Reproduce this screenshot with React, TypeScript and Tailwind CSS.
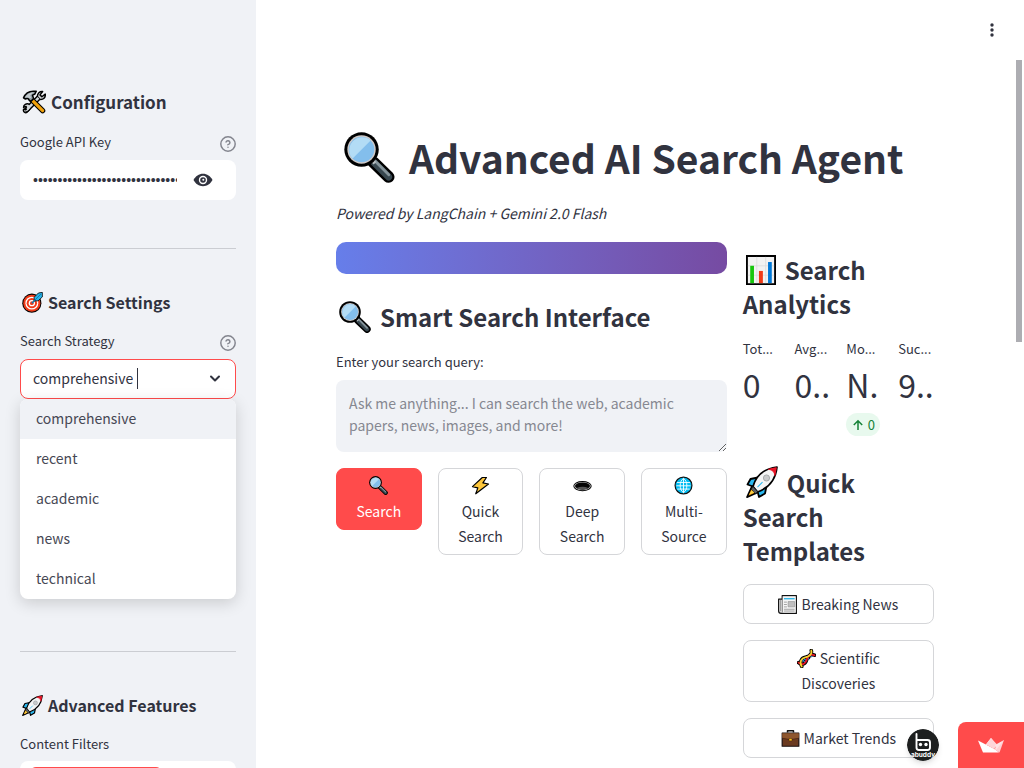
import { useState } from 'react';
import type { ReactNode } from 'react';

type IconProps = { className?: string };

function Emoji({ className = '', children }: IconProps & { children: ReactNode }) {
  return (
    <svg viewBox="0 0 32 32" aria-hidden="true" className={`inline-block shrink-0 ${className}`}>
      {children}
    </svg>
  );
}

function Magnifier({ className }: IconProps) {
  return (
    <Emoji className={className}>
      <path d="M18.5 19 28 28.2" stroke="#000" strokeWidth="7.4" strokeLinecap="round" />
      <path d="M19 19.3 28 28.2" stroke="#37474f" strokeWidth="4.4" strokeLinecap="round" />
      <path d="m19.5 18.2 8.6 8.6" stroke="#84939a" strokeWidth="1.8" strokeLinecap="round" />
      <path d="m16.4 16.6 3 3" stroke="#b8bec1" strokeWidth="2.2" />
      <circle cx="11" cy="11" r="10.8" fill="#000" />
      <circle cx="11" cy="11" r="8.9" fill="#cfcac8" />
      <circle cx="11" cy="11" r="8" fill="#83beec" />
      <path d="M5.4 16.7A8 8 0 0 1 16.7 5.4Z" fill="#b3dcf5" />
    </Emoji>
  );
}

function Tools({ className }: IconProps) {
  return (
    <Emoji className={className}>
      <path d="M5 27.5 22 10.5" stroke="#000" strokeWidth="7" strokeLinecap="round" />
      <path d="M20.5 8.5c0-4 3-7 7-6.5l-3.5 4.5 2.5 2.5 4.5-3.5c.5 4.5-2.5 7.5-7 7z" fill="#d5d9dc" stroke="#000" strokeWidth="2" strokeLinejoin="round" />
      <path d="M11.5 20.5c.5 4-2.5 9-7 9-2.5 0-3-2-2.5-4l3 1 1.500-2-1-2.500-3.500 1c0-4 4-5 6.500-4.500z" fill="#d5d9dc" stroke="#000" strokeWidth="1.8" strokeLinejoin="round" />
      <path d="M7 25.5 22 10.5" stroke="#d5d9dc" strokeWidth="3.3" />
      <path d="m11.5 11.5 16 16" stroke="#000" strokeWidth="7" strokeLinecap="round" />
      <path d="m12.5 12.5 15 15" stroke="#f2a20c" strokeWidth="4.2" strokeLinecap="round" />
      <path d="M2 10.5C4 5.5 8.5 1.5 15 1.5h4l-2 4-3 1.5 1.5 4.5-4 4-4-4.5-3 1z" fill="#8d999f" stroke="#000" strokeWidth="2" strokeLinejoin="round" />
      <path d="M4 9.5C7 5 11 3 16 3l-5 4 1.5 4" fill="#c4cbcf" />
    </Emoji>
  );
}

function Target({ className }: IconProps) {
  return (
    <Emoji className={className}>
      <circle cx="15" cy="17" r="14.6" fill="#000" />
      <circle cx="15" cy="17" r="13" fill="#f03a17" />
      <circle cx="15" cy="17" r="9.8" fill="#fff" />
      <circle cx="15" cy="17" r="7.9" fill="#f03a17" />
      <circle cx="15" cy="17" r="4.8" fill="#fff" />
      <circle cx="15" cy="17" r="2.8" fill="#f03a17" />
      <path d="m15 17 8-8" stroke="#067bb2" strokeWidth="2.2" />
      <path d="m18.5 8 6.5-6.5 6-1v7L24.500 13.500h-6z" fill="#28b3e8" stroke="#000" strokeWidth="1.2" strokeLinejoin="round" />
      <path d="m16 16 13-13" stroke="#067bb2" strokeWidth="1.4" />
    </Emoji>
  );
}

function Rocket({ className }: IconProps) {
  return (
    <Emoji className={className}>
      <path d="M6 20 1 31.2 12.500 26z" fill="#f59a00" stroke="#000" strokeWidth="1.6" strokeLinejoin="round" />
      <path d="M12 11.500 4.500 13 1.500 18.500l5.500 2zM20.500 20 19 27.500 13 31l-1.500-6z" fill="#2bb9f0" stroke="#000" strokeWidth="1.8" strokeLinejoin="round" />
      <path d="M7 20.500C9 13 15 3 31 1c-1.500 15-11 22-19.500 25z" fill="#f4f5f5" stroke="#000" strokeWidth="1.700" strokeLinejoin="round" />
      <path d="M22.500 3.300Q28.500 4 28.800 9.500L30.300 1.700z" fill="#e81224" stroke="#e81224" />
      <circle cx="20.500" cy="12" r="3.100" fill="#c8cbcc" stroke="#9b9fa1" strokeWidth=".8" />
      <path d="m16.500 16.200-5 5" stroke="#2bb9f0" strokeWidth="1.100" />
      <path d="m6.800 20.300 5 5.300-2.300 2.200-4.200-4.500z" fill="#5b6064" stroke="#000" strokeWidth=".7" />
      <path d="m3 28.800 2.600-4.600 2.700 2.400z" fill="#f7d046" />
    </Emoji>
  );
}

function Chart({ className }: IconProps) {
  return (
    <Emoji className={className}>
      <path d="M1 1h30v30H1z" fill="#f2f2f2" stroke="#000" strokeWidth="2" />
      <path d="M2 11.500h28M2 21.500h28M11.500 2v28M21 2v28" stroke="#dadada" strokeWidth=".8" />
      <path d="M4.500 11.500h4V30h-4z" fill="#16c60c" />
      <path d="M13.800 17H18v13h-4.200z" fill="#f03a17" />
      <path d="M23.500 7.500h4V30h-4z" fill="#0078d7" />
    </Emoji>
  );
}

function Bolt({ className }: IconProps) {
  return (
    <Emoji className={className}>
      <path d="M19 2.500 2.500 18l9 2L8 30 29.500 13.500l-9.500-2 6-9z" fill="#ffc83d" stroke="#000" strokeWidth="2" strokeLinejoin="round" />
    </Emoji>
  );
}

function Hole({ className }: IconProps) {
  return (
    <Emoji className={className}>
      <ellipse cx="16" cy="17" rx="15.500" ry="8.500" fill="#000" />
      <ellipse cx="16" cy="17" rx="14" ry="7" fill="#c7c7c7" />
      <ellipse cx="16" cy="17" rx="12.600" ry="6" fill="#050505" />
      <path d="M6 20q10-3.500 20 0-4 3-10 3t-10-3" fill="#555" />
    </Emoji>
  );
}

function Globe({ className }: IconProps) {
  return (
    <Emoji className={className}>
      <circle cx="16" cy="16" r="14.200" fill="#00bcf2" stroke="#111" strokeWidth="2" />
      <path d="M16 4v24M5 11h22M4 16.500h24M5.500 22h21M16 4c-7.500 5-7.500 19 0 24M16 4c7.500 5 7.500 19 0 24" fill="none" stroke="#fff" strokeWidth="1.500" />
    </Emoji>
  );
}

function Newspaper({ className }: IconProps) {
  return (
    <Emoji className={className}>
      <path d="M7 1h24v30H5q-4 0-4-4V7h6z" fill="#d9d9d9" stroke="#111" strokeWidth="1.900" strokeLinejoin="round" />
      <path d="M8 2.500h21.500v27H8z" fill="#f5f5f5" />
      <path d="M4.500 8v19M7.500 5v24" stroke="#777" strokeWidth="1.200" />
      <path d="M10 6.200h18" stroke="#35b9e9" strokeWidth="2.400" />
      <path d="M17 11h11v9H17z" fill="#bfbfbf" stroke="#8f8f8f" />
      <path d="M10 12h5M10 16h5M10 20h5M10 24h18M10 27h18" stroke="#8a8a8a" strokeWidth="1.300" />
    </Emoji>
  );
}

function Dna({ className }: IconProps) {
  return (
    <Emoji className={className}>
      <path d="M2.500 23C8 27.500 14 26 16 19S22 7 29.500 10.500M8 29.500C3 22 8 15 14 14S26 9 24 2.500" fill="none" stroke="#000" strokeWidth="6" strokeLinecap="round" />
      <path d="m9 18 6 5m-4-8 7 4m-3-7 7 4m-2-8 5 5" stroke="#000" strokeWidth="4" />
      <path d="m9 18 5 5m-3-7 6 4m-2-7 5 4m0-8 5 4" stroke="#2a8fe0" strokeWidth="2" />
      <path d="M2.500 23C8 27.500 14 26 16 19S22 7 29.500 10.500" fill="none" stroke="#e81224" strokeWidth="3" strokeLinecap="round" />
      <path d="M8 29.500C3 22 8 15 14 14S26 9 24 2.500" fill="none" stroke="#f7d22e" strokeWidth="3" strokeLinecap="round" />
    </Emoji>
  );
}

function Briefcase({ className }: IconProps) {
  return (
    <Emoji className={className}>
      <path d="M11 6V3h10v3" fill="none" stroke="#111" strokeWidth="2.600" strokeLinejoin="round" />
      <path d="M2 7h28v22H2z" fill="#6b3a20" stroke="#1c1110" strokeWidth="2" strokeLinejoin="round" />
      <path d="M2 7h28v8q-14 5-28 0z" fill="#8e562e" />
      <path d="M2 15.500q14 5 28 0" fill="none" stroke="#4a2616" strokeWidth="1.400" />
      <path d="M13.500 16h5v4h-5z" fill="#fcc21b" stroke="#42210b" strokeWidth=".8" />
    </Emoji>
  );
}

function HelpIcon() {
  return (
    <svg viewBox="0 0 24 24" className="size-4 text-[#83858e]" fill="none" stroke="currentColor" strokeWidth="2.200" strokeLinecap="round" strokeLinejoin="round" aria-hidden="true">
      <circle cx="12" cy="12" r="10.800" />
      <path d="M9.100 9a3 3 0 0 1 5.800 1c0 2-3 3-3 3M12 17h.01" />
    </svg>
  );
}

function EyeIcon() {
  return (
    <svg viewBox="0 0 20 20" className="size-5" aria-hidden="true">
      <path d="M.5 10C2.500 6.200 6 3.800 10 3.800s7.500 2.400 9.500 6.200c-2 3.800-5.500 6.200-9.500 6.200S2.500 13.800.5 10z" fill="currentColor" />
      <circle cx="10" cy="10" r="4.200" fill="#fff" />
      <circle cx="10" cy="10" r="2.800" fill="currentColor" />
      <circle cx="10.300" cy="9.700" r="1" fill="#fff" />
    </svg>
  );
}

function SideHeading({ icon, children }: { icon: ReactNode; children: ReactNode }) {
  return (
    <h3 className="flex items-center gap-[5px] pl-0.5 text-[16px] leading-6 font-semibold">
      {icon}
      <span>{children}</span>
    </h3>
  );
}

const headingClass = 'text-[24px] leading-[34px] font-semibold';
const labelClass = 'text-[13px] leading-5';
const outlineButton =
  'min-h-10 w-full rounded-lg border border-[#d5d6d9] bg-white px-4 py-[5px] text-[14px] leading-[25px]';

const strategies = ['comprehensive', 'recent', 'academic', 'news', 'technical'];

function Sidebar() {
  const [strategy, setStrategy] = useState('comprehensive');
  return (
    <aside className="h-full w-64 shrink-0 overflow-hidden bg-[#f0f2f6] px-5 pt-[90px]">
      <h2 className="flex items-center gap-[5px] pl-0.5 text-[17px] leading-6 font-semibold">
        <Tools className="size-6" />
        <span>Configuration</span>
      </h2>

      <div className="mt-[18px] flex h-6 items-start justify-between">
        <label htmlFor="api-key" className={labelClass}>Google API Key</label>
        <button type="button" aria-label="About the API key" className="mt-1"><HelpIcon /></button>
      </div>
      <div className="mt-1 flex h-10 items-center rounded-lg bg-white pr-[23px] pl-[13px]">
        <input
          id="api-key"
          type="password"
          defaultValue="000000000000000000000000000000000000000"
          className="min-w-0 flex-1 bg-transparent font-['Liberation_Sans',sans-serif] text-[14px] outline-none"
        />
        <button type="button" aria-label="Show password" className="ml-4">
          <EyeIcon />
        </button>
      </div>

      <hr className="mt-12 border-[#cbcdd2]" />

      <div className="mt-[41px]">
        <SideHeading icon={<Target className="size-[21px]" />}>Search Settings</SideHeading>
      </div>
      <div className="mt-[17px] flex h-6 items-start justify-between">
        <label htmlFor="strategy" className={labelClass}>Search Strategy</label>
        <button type="button" aria-label="About the search strategy" className="mt-1"><HelpIcon /></button>
      </div>
      <div className="relative mt-1">
        <div className="flex h-10 items-center rounded-lg border border-[#ff4b4b] bg-white px-3 pb-0.5">
          <input
            id="strategy"
            role="combobox"
            aria-expanded="true"
            aria-controls="strategy-options"
            value={strategy}
            onChange={(e) => setStrategy(e.target.value)}
            className="field-sizing-content bg-transparent text-[14px] leading-6 outline-none"
          />
          <span className="ml-1 h-[21px] w-px bg-[#31333f]" />
          <svg viewBox="0 0 16 16" className="ml-auto size-4" fill="none" stroke="currentColor" strokeWidth="2" strokeLinecap="round" strokeLinejoin="round" aria-hidden="true">
            <path d="m4 6.500 4 4 4-4" />
          </svg>
        </div>
        <ul
          id="strategy-options"
          role="listbox"
          className="absolute top-full right-0 left-0 z-10 overflow-hidden rounded-lg bg-white text-[14px] leading-[38px] text-[#464854] shadow-[0_4px_16px_rgba(0,0,0,0.16)]"
        >
          {strategies.map((name) => (
            <li
              key={name}
              role="option"
              aria-selected={name === strategy}
              onClick={() => setStrategy(name)}
              className="h-10 cursor-pointer px-4 aria-selected:bg-[#f0f2f6]"
            >
              {name}
            </li>
          ))}
        </ul>
      </div>

      <hr className="mt-[252px] border-[#cbcdd2]" />

      <div className="mt-[41px]">
        <SideHeading icon={<Rocket className="size-[21px]" />}>Advanced Features</SideHeading>
      </div>
      <div className="mt-[17px] flex h-6 items-start">
        <span className={labelClass}>Content Filters</span>
      </div>
      <div className="mt-[3px] h-20 rounded-lg bg-white px-2.5 py-1.5">
        <div className="h-6 w-[132px] rounded-md bg-[#ff4b4b]" />
      </div>
    </aside>
  );
}

const metrics = [
  { label: 'Tot...', value: '0' },
  { label: 'Avg...', value: '0..' },
  { label: 'Mo...', value: 'N.', delta: '0' },
  { label: 'Suc...', value: '9..' },
];

function Metrics() {
  return (
    <dl className="mt-[18px] grid grid-cols-4 gap-4">
      {metrics.map((m) => (
        <div key={m.label} className="min-w-0">
          <dt className={`whitespace-nowrap ${labelClass}`}>{m.label}</dt>
          <dd className="mt-0.5 overflow-hidden text-[32px] leading-[46px] whitespace-nowrap">{m.value}</dd>
          {m.delta && (
            <dd className="mt-1.5 flex h-[23px] w-[34px] items-center justify-center gap-1 rounded-full bg-[#e8f9ee] text-[13px] leading-5 text-[#158237]">
              <svg viewBox="0 0 12 12" className="size-3" fill="none" stroke="currentColor" strokeWidth="1.500" aria-hidden="true">
                <path d="M6 11V1.800M1.800 6 6 1.800 10.200 6" />
              </svg>
              {m.delta}
            </dd>
          )}
        </div>
      ))}
    </dl>
  );
}

function SearchColumn() {
  return (
    <section className="min-w-0 grow basis-[calc(66.67%-16px)]">
      <div className="h-8 rounded-[10px] bg-linear-to-r from-[#667eea] to-[#764ba2]" />
      <h3 className={`mt-[26px] flex items-center pl-[3px] ${headingClass}`}>
        <Magnifier className="mr-[9px] size-8" />
        <span>Smart Search Interface</span>
      </h3>
      <label htmlFor="query" className={`mt-[18px] block ${labelClass}`}>Enter your search query:</label>
      <textarea
        id="query"
        placeholder="Ask me anything... I can search the web, academic papers, news, images, and more!"
        className="mt-2 block h-[72px] w-full rounded-lg bg-[#f0f2f6] px-[13px] py-3 text-[14px] leading-[22px] outline-none placeholder:text-[#868891]"
      />
      <div className="mt-4 grid grid-cols-4 items-start gap-4">
        <button type="button" className="rounded-lg border border-[#ff4b4b] bg-[#ff4b4b] px-4 py-[5px] text-[14px] leading-[25px] text-white">
          <span className="block"><Magnifier className="size-[19px] align-[-3px]" /></span> Search
        </button>
        <button type="button" className={outlineButton}>
          <span className="block"><Bolt className="size-[19px] align-[-3px]" /></span> Quick Search
        </button>
        <button type="button" className={outlineButton}>
          <span className="block"><Hole className="size-[19px] align-[-3px]" /></span> Deep Search
        </button>
        <button type="button" className={outlineButton}>
          <span className="block"><Globe className="size-[19px] align-[-3px]" /></span> Multi-Source
        </button>
      </div>
    </section>
  );
}

function AnalyticsColumn() {
  return (
    <section className="min-w-0 grow basis-[calc(33.33%-16px)] pt-[11px]">
      <h3 className={headingClass}>
        <Chart className="mr-[9px] ml-[3px] size-[30px] align-[-5px]" />
        Search Analytics
      </h3>
      <Metrics />
      <h3 className={`mt-[30px] ${headingClass}`}>
        <Rocket className="mr-[9px] ml-[3px] size-8 align-[-5px]" />
        Quick Search Templates
      </h3>
      <div className="mt-4 flex flex-col gap-4">
        <button type="button" className={outlineButton}>
          <Newspaper className="mr-1 size-[19px] align-[-4px]" />Breaking News
        </button>
        <button type="button" className={outlineButton}>
          <Dna className="mr-1 size-[19px] align-[-4px]" />Scientific Discoveries
        </button>
        <button type="button" className={outlineButton}>
          <Briefcase className="mr-1 size-[19px] align-[-4px]" />Market Trends
        </button>
      </div>
    </section>
  );
}

function BuddyBadge() {
  return (
    <svg viewBox="0 0 32 32" className="absolute right-[85px] bottom-[7px] size-8 rounded-full shadow-md" role="img" aria-label="abuddy">
      <circle cx="16" cy="16" r="16" fill="#1d1f1f" />
      <path d="M9.500 5v13.500q0 2.500 2.500 2.500h8.500q2.500 0 2.500-2.500v-5q0-2.500-2.500-2.500h-11" fill="none" stroke="#fff" strokeWidth="1.900" strokeLinecap="round" strokeLinejoin="round" />
      <circle cx="13.500" cy="15.500" r="1.700" fill="#fff" />
      <circle cx="19" cy="15.500" r="1.700" fill="#fff" />
      <text x="16" y="27.500" textAnchor="middle" fontSize="6.500" fontWeight="700" fill="#fff" fontFamily="Inter, sans-serif">abuddy</text>
    </svg>
  );
}

export default function App() {
  return (
    <div className="relative flex h-screen overflow-hidden bg-white font-['Noto_Sans_CJK_SC',sans-serif] text-[#31333f]">
      <Sidebar />
      <main className="min-w-0 flex-1 overflow-hidden pr-[90px] pl-20">
        <header className="pt-[131px]">
          <h1 className="flex items-center pl-2 text-[39px] leading-[53px] font-bold whitespace-nowrap">
            <Magnifier className="mr-3.5 size-[51px]" />
            <span>Advanced AI Search Agent</span>
          </h1>
          <p className="mt-[17px] text-[14px] leading-6 italic">Powered by LangChain + Gemini 2.0 Flash</p>
        </header>
        <div className="mt-[17px] flex gap-4">
          <SearchColumn />
          <AnalyticsColumn />
        </div>
      </main>

      <button type="button" aria-label="Main menu" className="absolute top-5 right-[22px] flex size-5 items-center justify-center">
        <svg viewBox="0 0 20 20" className="size-5" fill="currentColor" aria-hidden="true">
          <circle cx="10" cy="5" r="1.700" />
          <circle cx="10" cy="10" r="1.700" />
          <circle cx="10" cy="15" r="1.700" />
        </svg>
      </button>
      <div className="absolute top-[60px] right-0.5 h-[282px] w-1.5 bg-[#adadb2]" />
      <BuddyBadge />
      <a href="#streamlit" aria-label="Hosted with Streamlit" className="absolute right-0 bottom-0 flex h-[46px] w-[66px] items-center justify-center rounded-tl-lg bg-[#ff4b4b]">
        <svg viewBox="0 0 26 15" className="h-[15px] w-[26px]" aria-hidden="true">
          <path d="M13 0 18 6.500 7.500 7z" fill="#fff" />
          <path d="M0 2.500 17.500 11.500 21 14.500H5z" fill="#fff" />
          <path d="M13 0 19 6.500 16 11 8 6.500z" fill="#ffd5d9" />
          <path d="M26 2 21.500 14.500 16 11z" fill="#ffd0d3" />
          <path d="m26 2-9 5 1 5z" fill="#ffe3e5" />
        </svg>
      </a>
    </div>
  );
}
